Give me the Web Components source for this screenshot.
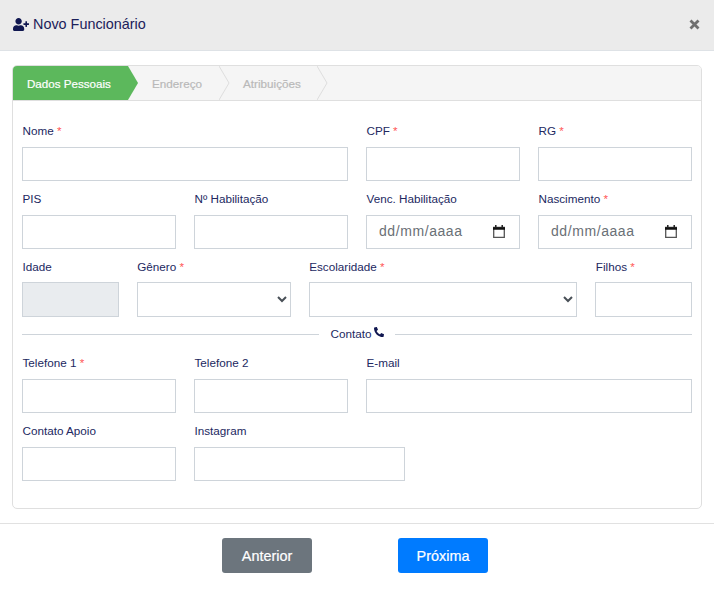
<!DOCTYPE html>
<html lang="pt-BR">
<head>
<meta charset="utf-8">
<title>Novo Funcionário</title>
<style>
html,body{margin:0;padding:0;background:#fff;}
body{font-family:"Liberation Sans",Arial,sans-serif;color:#1b2059;width:714px;height:590px;overflow:hidden;}
</style>
</head>
<body>
<x-modal>
  <x-modal-header slot="header" title-text="Novo Funcionário"></x-modal-header>
  <x-wizard>
    <x-step slot="steps" active w="115">Dados Pessoais</x-step>
    <x-step slot="steps" w="91">Endereço</x-step>
    <x-step slot="steps" w="98">Atribuições</x-step>
    <x-field span="6" label="Nome" required></x-field>
    <x-field span="3" label="CPF" required></x-field>
    <x-field span="3" label="RG" required></x-field>
    <x-field span="3" short label="PIS"></x-field>
    <x-field span="3" short label="Nº Habilitação"></x-field>
    <x-field span="3" short label="Venc. Habilitação" type="date"></x-field>
    <x-field span="3" short label="Nascimento" type="date" required></x-field>
    <x-field span="2" label="Idade" type="disabled" tall></x-field>
    <x-field span="3" label="Gênero" type="select" required tall></x-field>
    <x-field span="5" label="Escolaridade" type="select" required tall></x-field>
    <x-field span="2" label="Filhos" required tall></x-field>
    <x-divider>Contato</x-divider>
    <x-field span="3" label="Telefone 1" required></x-field>
    <x-field span="3" label="Telefone 2"></x-field>
    <x-field span="6" label="E-mail"></x-field>
    <x-field span="3" label="Contato Apoio"></x-field>
    <x-field span="4" label="Instagram"></x-field>
  </x-wizard>
  <x-button slot="footer" variant="secondary">Anterior</x-button>
  <x-button slot="footer" variant="primary">Próxima</x-button>
</x-modal>
<script>
function def(name, css, html, init){
  customElements.define(name, class extends HTMLElement{
    constructor(){
      super();
      const r=this.attachShadow({mode:'open'});
      r.innerHTML='<style>'+css+'</style>'+(typeof html==='function'?html(this):html);
    }
    connectedCallback(){
      if(init) init(this);
    }
  });
}
def('x-modal',`
:host{display:flex;flex-direction:column;width:714px;height:590px;box-sizing:border-box;}
main{padding:14px 12px 14px 12px;border-bottom:1px solid #e1e1e1;}
footer{display:flex;justify-content:center;gap:86px;padding:14px 4px 0 0;}
`,`<slot name="header"></slot><main><slot></slot></main><footer><slot name="footer"></slot></footer>`);

def('x-modal-header',`
:host{display:flex;align-items:center;height:51px;box-sizing:border-box;background:#ebebeb;border-bottom:1px solid #dee2e6;padding:0 13px 2px;color:#1b2059;}
svg.u{width:16px;height:13px;fill:#101750;margin:1px 4px 0 0;flex:none;}
span{font-size:14.4px;flex:1;}
svg.x{width:11px;height:11px;margin-right:1px;flex:none;}
`,h=>`<svg class="u" viewBox="0 0 640 512"><path d="M624 208h-64v-64c0-8.800-7.200-16-16-16h-32c-8.800 0-16 7.200-16 16v64h-64c-8.800 0-16 7.200-16 16v32c0 8.800 7.200 16 16 16h64v64c0 8.800 7.200 16 16 16h32c8.800 0 16-7.200 16-16v-64h64c8.800 0 16-7.200 16-16v-32c0-8.800-7.200-16-16-16zm-400 48c70.700 0 128-57.300 128-128S294.700 0 224 0 96 57.300 96 128s57.300 128 128 128zm89.600 32h-16.700c-22.200 10.200-46.900 16-72.900 16s-50.600-5.800-72.900-16h-16.700C60.200 288 0 348.200 0 422.400V464c0 26.500 21.500 48 48 48h352c26.500 0 48-21.500 48-48v-41.600c0-74.200-60.200-134.400-134.400-134.400z"/></svg><span>${h.getAttribute('title-text')}</span><svg class="x" viewBox="0 0 11 11"><path d="M1.500 1.500l8 8M9.500 1.500l-8 8" stroke="#6f6f6f" stroke-width="2.800" fill="none"/></svg>`);

def('x-wizard',`
:host{display:block;border:1px solid #dfdfdf;border-radius:5px;overflow:hidden;height:444px;box-sizing:border-box;}
nav{display:flex;height:35px;box-sizing:border-box;background:#f5f5f5;border-bottom:1px solid #dfdfdf;}
section{display:grid;grid-template-columns:repeat(12,1fr);column-gap:18px;align-content:start;padding:21px 9px 0 9px;}
`,`<nav><slot name="steps"></slot></nav><section><slot></slot></section>`);

def('x-step',`
:host{display:block;position:relative;box-sizing:border-box;height:34px;line-height:36px;font-size:11.7px;color:#b9b9b9;padding:0 0 0 24px;-webkit-text-stroke:.2px currentColor;white-space:nowrap;}
:host([active]){background:#5cb85c;color:#fff;padding:0 0 0 14px;font-size:11.6px;}
svg{position:absolute;left:100%;top:0;width:11px;height:34px;display:block;}
`,h=>`<slot></slot><svg viewBox="0 0 11 34">${h.hasAttribute('active')
  ?'<path d="M0 0L10 17L0 34Z" fill="#5cb85c"/>'
  :'<path d="M0 0L10 17L0 34" fill="none" stroke="#dedede"/>'}</svg>`,h=>{h.style.width=h.getAttribute('w')+'px';});

def('x-field',`
:host{display:block;min-width:0;height:68px;}
:host([short]){height:67px;}
:host([tall]){height:61px;}
label{display:block;font-size:11.7px;line-height:18px;margin:0 0 7px .5px;color:#22285f;white-space:nowrap;}
:host([tall]) label{margin-top:1px;margin-bottom:6px;}
b{font-weight:400;color:#f55;}
input,select,.d{display:block;width:100%;height:34px;box-sizing:border-box;border:1px solid #ced4da;border-radius:0;background:#fff;padding:0 12px;margin:0;outline:none;font:14px "Liberation Sans",sans-serif;color:#495057;}
:host([tall]) input,:host([tall]) select{height:35px;}
input.dis{background:#e9ecef;}
.d{display:flex;align-items:center;justify-content:space-between;padding:0 14px 2px 12px;color:#6a7076;}
.d span{letter-spacing:.58px;}
.d svg{width:12px;height:13px;flex:none;}
`,h=>{
  const t=h.getAttribute('type')||'text',l=h.getAttribute('label');
  const req=h.hasAttribute('required')?' <b>*</b>':'';
  let c='<input id="i" type="text">';
  if(t==='disabled')c='<input id="i" class="dis" type="text" disabled>';
  if(t==='select')c='<select id="i"><option></option></select>';
  if(t==='date')c=`<div class="d"><span>dd/mm/aaaa</span><svg viewBox="0 0 12 13"><path d="M.7 2.500h10.600v9.800H.7z" fill="none" stroke="#555" stroke-width="1.300"/><path d="M0 3.500h12" stroke="#111" stroke-width="2.400" fill="none"/><path d="M2.800 0v2M9.200 0v2" stroke="#111" stroke-width="1.400"/></svg></div>`;
  return `<label for="i">${l}${req}</label>${c}`;
},h=>{h.style.gridColumn='span '+(h.getAttribute('span')||3);});

def('x-divider',`
:host{grid-column:1/-1;display:flex;align-items:center;gap:12px;height:32px;margin:0 0 4px 0;font-size:11.7px;color:#22285f;}
i{flex:1;height:1px;background:#ced4da;}
span{display:flex;align-items:flex-start;gap:3px;line-height:14px;}
svg{width:10px;height:10px;fill:#101750;transform:scaleX(-1);margin:0 -1px 0 0;}
`,`<i></i><span><slot></slot><svg viewBox="0 0 512 512"><path d="M493.400 24.600l-104-24c-11.300-2.600-22.900 3.300-27.500 13.900l-48 112c-4.200 9.800-1.400 21.300 6.900 28l60.600 49.600c-36 76.700-98.900 140.500-177.200 177.200l-49.600-60.600c-6.800-8.300-18.200-11.100-28-6.900l-112 48C3.900 366.500-2 378.100.6 389.400l24 104C27.100 504.200 36.700 512 48 512c256.100 0 464-207.500 464-464 0-11.200-7.700-20.900-18.600-23.400z"/></svg></span><i></i>`);

def('x-button',`
:host{display:block;}
button{display:block;width:90px;height:35px;border:0;border-radius:3px;color:#fff;font:14.4px "Liberation Sans",Arial,sans-serif;padding:0;-webkit-text-stroke:.2px #fff;}
:host([variant=secondary]) button{background:#6c757d;}
:host([variant=primary]) button{background:#007bff;}
`,`<button type="button"><slot></slot></button>`);
</script>
</body>
</html>
